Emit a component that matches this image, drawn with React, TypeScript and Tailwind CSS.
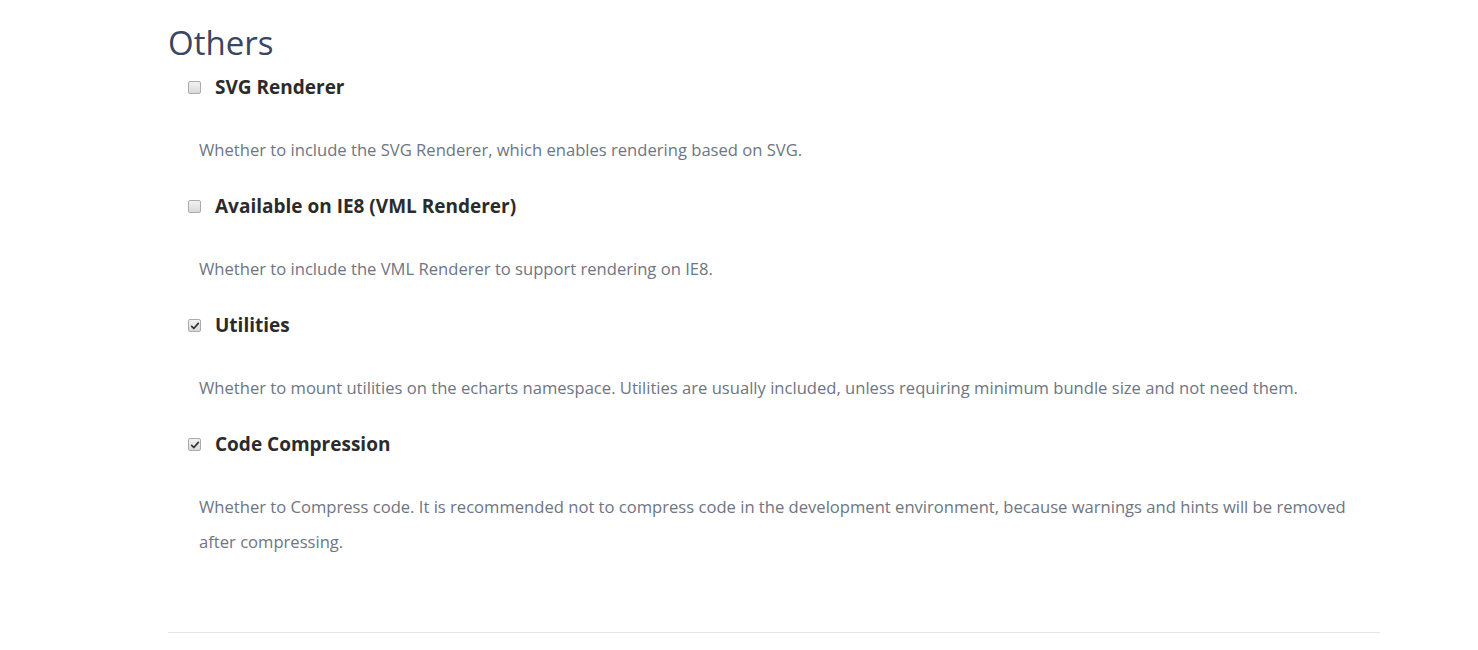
import React from 'react'

type Option = {
  id: string
  title: string
  desc: string
  checked: boolean
}

const OPTIONS: Option[] = [
  {
    id: 'svg',
    title: 'SVG Renderer',
    desc: 'Whether to include the SVG Renderer, which enables rendering based on SVG.',
    checked: false,
  },
  {
    id: 'vml',
    title: 'Available on IE8 (VML Renderer)',
    desc: 'Whether to include the VML Renderer to support rendering on IE8.',
    checked: false,
  },
  {
    id: 'utils',
    title: 'Utilities',
    desc: 'Whether to mount utilities on the echarts namespace. Utilities are usually included, unless requiring minimum bundle size and not need them.',
    checked: true,
  },
  {
    id: 'compress',
    title: 'Code Compression',
    desc: 'Whether to Compress code. It is recommended not to compress code in the development environment, because warnings and hints will be removed after compressing.',
    checked: true,
  },
]

function Checkbox({ checked }: { checked: boolean }) {
  return (
    <span className="flex h-[13px] w-[13px] shrink-0 items-center justify-center rounded-[2px] border border-[#ababab] bg-gradient-to-b from-[#f2f2f2] to-[#d9d9d9]">
      {checked && (
        <svg viewBox="0 0 12 12" className="h-[10px] w-[10px]">
          <path d="M2 6.5 L4.6 9 L10 2.8" fill="none" stroke="#333" strokeWidth="2" strokeLinecap="round" strokeLinejoin="round" />
        </svg>
      )}
    </span>
  )
}

export default function App() {
  return (
    <div className="min-h-[650px] bg-white font-['Open_Sans','Noto_Sans',sans-serif]">
      <div className="mx-[168px] w-[1212px] pt-[23px]">
        <h2 className="text-[33px] leading-[40px] text-[#3a4661]">Others</h2>

        <div className="mt-[11px]">
          {OPTIONS.map(opt => (
            <div key={opt.id} className="mb-[26px]">
              <label className="flex h-[27px] items-center pl-[20px]">
                <Checkbox checked={opt.checked} />
                <span className="ml-[14px] text-[19px] font-bold text-[#2b2b2b]">{opt.title}</span>
              </label>
              <p className="mt-[31px] pl-[31px] pr-[30px] text-[16.6px] leading-[35px] text-[#6e7583]">
                {opt.desc}
              </p>
            </div>
          ))}
        </div>

        {/* divider */}
        <div className="mt-[73px] h-px bg-[#e5e5e5]" />
      </div>
    </div>
  )
}
